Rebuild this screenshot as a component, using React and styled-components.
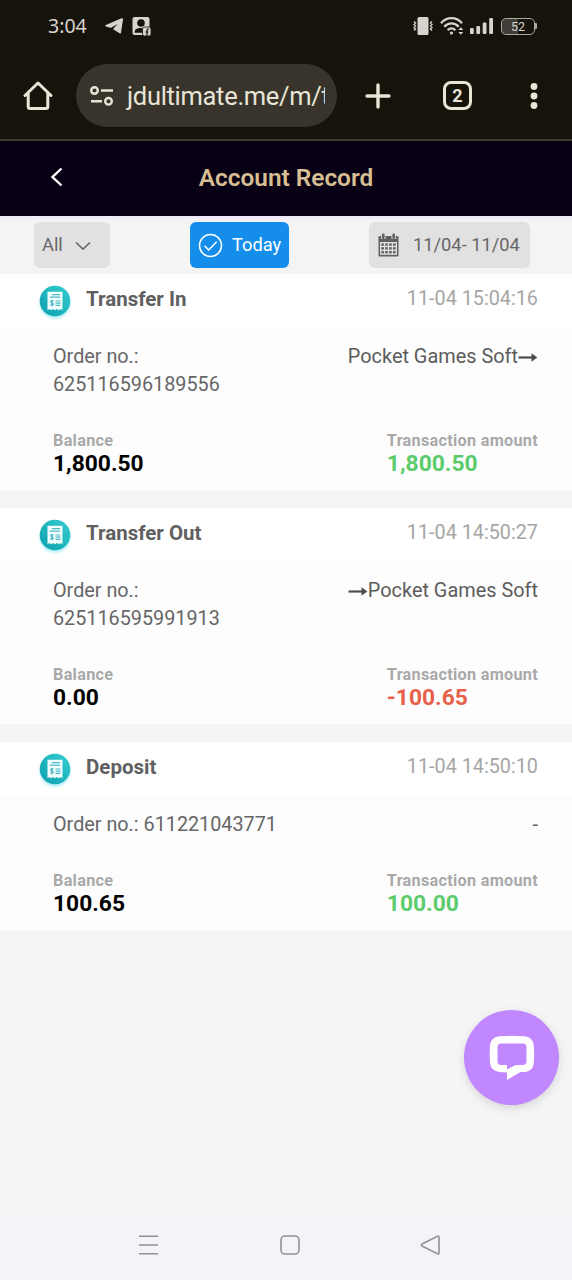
import React from 'react';
import styled, { createGlobalStyle } from 'styled-components';

const GlobalStyle = createGlobalStyle`
  * {
    box-sizing: border-box;
  }
  body {
    margin: 0;
    background: #f5f5f5;
    font-family: Roboto, 'Liberation Sans', sans-serif;
  }
  svg {
    display: block;
    flex: none;
  }
`;

const Screen = styled.div`
  display: flex;
  flex-direction: column;
  width: 572px;
  height: 1280px;
  overflow: hidden;
  background: #f5f5f5;
`;

const Chrome = styled.header`
  height: 141px;
  background: #16130b;
  border-bottom: 2px solid #3c3a35;
  color: #e8e4d6;
`;

const StatusBar = styled.div`
  display: flex;
  align-items: center;
  height: 52px;
  padding: 0 35px 0 48px;
  color: #d6d4ce;
`;

const Clock = styled.span`
  width: 57px;
  padding-bottom: 1px;
  font-family: 'Noto Sans', sans-serif;
  font-size: 19.5px;
`;

const StatusGroup = styled.div`
  display: flex;
  align-items: center;
  gap: ${props => props.$gap}px;
  margin-left: ${props => (props.$right ? 'auto' : '0')};
`;

const AddressBar = styled.div`
  display: flex;
  align-items: center;
  height: 87px;
  padding: 0 34px 0 22px;
`;

const UrlPill = styled.div`
  display: flex;
  align-items: center;
  width: 261px;
  height: 63px;
  margin: 0 27px 0 22px;
  padding: 0 12px 0 13px;
  border-radius: 32px;
  background: #38342c;
`;

const Url = styled.span`
  flex: 1;
  overflow: hidden;
  margin-left: 11px;
  padding-left: 2px;
  white-space: nowrap;
  font-size: 25.5px;
  letter-spacing: -0.3px;
  line-height: 40px;
`;

const TabCount = styled.div`
  display: flex;
  align-items: center;
  justify-content: center;
  width: 29px;
  height: 29px;
  margin: 0 auto 0 51px;
  border: 3px solid #e8e4d6;
  border-radius: 8px;
  font-size: 18px;
  font-weight: 700;
`;

const TitleBar = styled.div`
  display: grid;
  grid-template-columns: 100px 1fr 100px;
  align-items: center;
  height: 75px;
  padding-bottom: 3px;
  background: #080014;
`;

const BackButton = styled.button`
  width: 40px;
  margin-left: 49px;
  padding: 0;
  border: none;
  background: none;
`;

const Title = styled.h1`
  margin: 0;
  color: #d6bf93;
  font-size: 24.4px;
  font-weight: 600;
  text-align: center;
`;

const Filters = styled.div`
  display: flex;
  align-items: center;
  justify-content: space-between;
  height: 58px;
  padding: 0 42px 0 34px;
  background: linear-gradient(#efe6fb, #f4f4f4 5px);
`;

const FilterButton = styled.button`
  display: flex;
  align-items: center;
  gap: ${props => props.$gap}px;
  width: ${props => props.$width}px;
  height: 46px;
  padding: 0 8px;
  border: none;
  border-radius: 6px;
  background: ${props => (props.$active ? '#148eea' : '#e1e1e1')};
  color: ${props => (props.$active ? '#fff' : '#666')};
  font-family: inherit;
  font-size: 18.3px;
  line-height: 24px;
  white-space: nowrap;
`;

const RecordList = styled.main`
  display: flex;
  flex-direction: column;
  flex: 1;
  gap: 18px;
`;

const Record = styled.article`
  background: #fdfdfd;
`;

const RecordHead = styled.div`
  display: flex;
  align-items: center;
  height: 54px;
  padding: 0 34px 3px 37px;
  background: #fff;
`;

const RecordType = styled.h2`
  flex: 1;
  margin: 0 0 0 13px;
  padding-bottom: 2px;
  color: #606060;
  font-size: 20.5px;
  font-weight: 700;
`;

const RecordTime = styled.time`
  padding-bottom: 2px;
  color: #a6a6a6;
  font-size: 19.8px;
`;

const RecordBody = styled.div`
  padding: 15px 34px 14px 53px;
`;

const Row = styled.div`
  display: flex;
  justify-content: space-between;
`;

const Order = styled.div`
  width: 230px;
  color: #666;
  font-size: 19.8px;
  line-height: 28px;
`;

const Provider = styled.div`
  display: flex;
  align-items: center;
  height: 28px;
  color: #5c5c5c;
  font-size: 19.9px;
  line-height: 28px;
`;

const Amounts = styled(Row)`
  margin-top: 30px;
`;

const Label = styled.div`
  color: #a9a9a9;
  font-size: 16.2px;
  font-weight: 700;
  letter-spacing: 0.3px;
  line-height: 23px;
`;

const Amount = styled.div`
  color: ${props => props.$color || '#000'};
  font-size: 22.8px;
  font-weight: 700;
  line-height: 24px;
`;

const NavBar = styled.nav`
  display: flex;
  align-items: center;
  justify-content: space-between;
  height: 64px;
  padding: 0 131px 6px 137px;
  background: #f3f3f8;
`;

const ChatButton = styled.button`
  position: fixed;
  top: 1010px;
  left: 464px;
  display: flex;
  align-items: center;
  justify-content: center;
  width: 95px;
  height: 95px;
  padding: 1px 0 0;
  border: none;
  border-radius: 50%;
  background: #c187ff;
  box-shadow: 0 3px 10px rgba(0, 0, 0, 0.13);
`;

const records = [
  {
    type: 'Transfer In',
    time: '11-04 15:04:16',
    order: '625116596189556',
    wrap: true,
    provider: 'Pocket Games Soft',
    arrow: 'after',
    balance: '1,800.50',
    amount: '1,800.50',
    color: '#5bcb6b',
  },
  {
    type: 'Transfer Out',
    time: '11-04 14:50:27',
    order: '625116595991913',
    wrap: true,
    provider: 'Pocket Games Soft',
    arrow: 'before',
    balance: '0.00',
    amount: '-100.65',
    color: '#e9604a',
  },
  {
    type: 'Deposit',
    time: '11-04 14:50:10',
    order: '611221043771',
    provider: '-',
    balance: '100.65',
    amount: '100.00',
    color: '#5bcb6b',
  },
];

const TelegramIcon = () => (
  <svg width="19" height="16" viewBox="0 0 19 16" fill="#d6d4ce">
    <path d="M18 1.200 16 14.800q-.3 1.200-1.400.5L8.500 11.500q-.6-.5 0-1.100l4-4.400-6 3.600q-.6.3-1.200.1L.8 8.400Q-.3 7.600.9 7L16.500.3Q18.200-.2 18 1.200Z" />
  </svg>
);

const ContactIcon = () => (
  <svg width="19" height="19" viewBox="0 0 19 19">
    <rect x=".5" y="0" width="17" height="18" rx="2" fill="#d6d4ce" />
    <circle cx="9" cy="6" r="3.800" fill="#16130b" />
    <path d="M2.500 15.800c0-3.800 3-4.700 6.500-4.700l2 .5v4.200Z" fill="#16130b" />
    <rect x="10.500" y="10" width="8.500" height="9" rx="2" fill="#d6d4ce" stroke="#16130b" strokeWidth=".8" />
    <path d="M17 12h-.8c-.9 0-1.200.5-1.200 1.300V19M13.500 15h3.200" fill="none" stroke="#16130b" strokeWidth="1.200" />
  </svg>
);

const VibrateIcon = () => (
  <svg width="20" height="18" viewBox="0 0 20 18">
    <rect x="4.500" y="0" width="11" height="18" rx="1.500" fill="#d6d4ce" />
    <path d="m1 4.500 1.600 1.500L1 7.500l1.600 1.500L1 10.500 2.600 12 1 13.500M19 4.500l-1.600 1.500L19 7.500l-1.600 1.500 1.600 1.500-1.600 1.500 1.600 1.500" fill="none" stroke="#d6d4ce" strokeWidth="1.300" />
  </svg>
);

const WifiIcon = () => (
  <svg width="24" height="19" viewBox="0 0 24 19" fill="none" stroke="#d6d4ce" strokeWidth="2.300">
    <path d="M1 6.200C7-.5 16-.5 22 6.200M4.300 9.800c4-4.500 10.400-4.500 14.400 0M7.700 13.200c2.200-2.400 5.400-2.400 7.600 0" />
    <circle cx="11.500" cy="16" r="1.600" fill="#d6d4ce" stroke="none" />
    <path d="m18.300 13 2.500-2.700 2.500 2.700ZM18.300 15l2.500 2.700 2.500-2.700Z" fill="#d6d4ce" stroke="none" />
  </svg>
);

const SignalIcon = () => (
  <svg width="23" height="16" viewBox="0 0 23 16" fill="#d6d4ce">
    <rect x="0" y="10" width="3.800" height="6" rx="1" />
    <rect x="6.300" y="8" width="3.800" height="8" rx="1" />
    <rect x="12.700" y="4.500" width="3.800" height="11.500" rx="1" />
    <rect x="19.200" y="0" width="3.800" height="16" rx="1" />
  </svg>
);

const BatteryShell = styled.div`
  display: flex;
  align-items: center;
  margin-left: 1.5px;
`;

const BatteryBody = styled.div`
  display: flex;
  align-items: center;
  justify-content: center;
  width: 34px;
  height: 17px;
  border: 1.5px solid #aaa8a2;
  border-radius: 5px;
  background: linear-gradient(90deg, #403d37 50%, transparent 50%);
  font-size: 12.5px;
`;

const BatteryTip = styled.div`
  width: 2px;
  height: 6px;
  border-radius: 0 1px 1px 0;
  background: #aaa8a2;
`;

const HomeIcon = () => (
  <svg width="32" height="31" viewBox="0 0 32 31" fill="none" stroke="#e8e4d6" strokeWidth="3" strokeLinecap="round" strokeLinejoin="round">
    <path d="M3 15.500 16 3l13 12.500M6.200 13v13.500q0 2 2 2h15.600q2 0 2-2V13" />
  </svg>
);

const TuneIcon = () => (
  <svg width="25" height="20" viewBox="0 0 25 20" fill="none" stroke="#e8e4d6" strokeWidth="2.400">
    <circle cx="5.500" cy="4.500" r="3.300" />
    <circle cx="19.500" cy="15.300" r="3.300" />
    <path d="M12 4.500h12M2 15.300h11" />
  </svg>
);

const PlusIcon = () => (
  <svg width="28" height="28" viewBox="0 0 28 28" stroke="#e8e4d6" strokeWidth="3.400" strokeLinecap="round">
    <path d="M14 3v22M3 14h22" />
  </svg>
);

const MoreIcon = () => (
  <svg width="8" height="26" viewBox="0 0 8 26" fill="#e8e4d6">
    <circle cx="4" cy="3.500" r="3.400" />
    <circle cx="4" cy="13" r="3.400" />
    <circle cx="4" cy="22.500" r="3.400" />
  </svg>
);

const BackIcon = () => (
  <svg width="15" height="20" viewBox="0 0 15 20" fill="none" stroke="#fff" strokeWidth="2.400">
    <path d="M12.500 1.500 3.500 10l9 8.500" />
  </svg>
);

const ChevronIcon = () => (
  <svg width="16" height="10" viewBox="0 0 16 10" fill="none" stroke="#666" strokeWidth="1.700">
    <path d="m1 2.500 7 6.500 7-6.500" />
  </svg>
);

const CheckIcon = () => (
  <svg width="25" height="25" viewBox="0 0 25 25" fill="none" stroke="#fff" strokeWidth="1.500">
    <circle cx="12.500" cy="12.500" r="11" />
    <path d="m6.500 12.800 4.200 4.200 8-8.300" />
  </svg>
);

const CalendarIcon = () => (
  <svg width="23" height="24" viewBox="-1 0 23 24">
    <path d="M1.800 3h17.400q1.300 0 1.300 1.300v18.200q0 1-1 1h-18q-1 0-1-1V4.300Q.5 3 1.800 3Z" fill="#606060" />
    <path d="M2 9h17v12.800H2Z" fill="#e1e1e1" />
    <path d="M5.300.5v5.500M15.700.5v5.500" stroke="#e1e1e1" strokeWidth="4.400" />
    <path d="M5.300 1.800v3M15.700 1.800v3" stroke="#606060" strokeWidth="2.700" strokeLinecap="round" />
    <g fill="#606060">
      {[10.4, 14.2, 18].map(y =>
        [3.3, 7.2, 11.1, 15].map(x => <rect key={`${x}-${y}`} x={x} y={y} width="2.600" height="2.400" />)
      )}
    </g>
  </svg>
);

const ReceiptIcon = () => (
  <svg width="36" height="44" viewBox="0 -4 36 44">
    <defs>
      <linearGradient id="receipt" x1="0" y1="1" x2="1" y2="0">
        <stop offset="0" stopColor="#0b9fae" />
        <stop offset="1" stopColor="#35cdd0" />
      </linearGradient>
      <filter id="glow" x="-20%" y="-20%" width="140%" height="150%">
        <feGaussianBlur stdDeviation="1.500" />
      </filter>
    </defs>
    <circle cx="18" cy="21.500" r="15" fill="#a9ecf7" filter="url(#glow)" />
    <circle cx="18" cy="19" r="15.300" fill="url(#receipt)" />
    <path d="M10.500 9.800h15v18.400l-1.900-1.200-1.900 1.200-1.900-1.200-1.800 1.200-1.900-1.200-1.900 1.200-1.900-1.200-1.800 1.200Z" fill="#f2fdfd" />
    <path d="M15 12.700h8M12.700 15.200h10.500M18.500 19h5M18.500 21.200h5M18.500 23.400h5" stroke="#4fbcc5" strokeWidth="1.200" />
    <path d="M16.500 19.200c-.8-.8-3-.7-3 .6 0 1.500 3 .8 3 2.400 0 1.400-2.400 1.400-3.200.5M15 17.800v6.400" fill="none" stroke="#2dadb8" strokeWidth="1" />
  </svg>
);

const ArrowIcon = () => (
  <svg width="20" height="12" viewBox="0 0 20 12">
    <path d="M.5 6.500h15" stroke="#4c4c4c" strokeWidth="2.200" />
    <path d="m13.500 2.200 5.800 4.300-5.800 4.300Z" fill="#4c4c4c" />
  </svg>
);

const ChatIcon = () => (
  <svg width="46" height="46" viewBox="0 0 46 46">
    <path fillRule="evenodd" d="M10.500 1.300Q23 .2 35.500 1.300 43.800 2 44.800 10.500q.8 8.500 0 17.500-.8 8-8.300 9h-5L18 45v-7.500l-7.500-.5Q2 36 1 28q-.7-9 0-17.500Q2 2 10.500 1.300ZM12 8.500Q8.700 8.700 8.500 12v14.500q.2 3.200 3.500 3.500h6v4.500l8.500-4.500H34q3.300-.3 3.500-3.500V12q-.2-3.300-3.500-3.500Z" fill="#fff" />
  </svg>
);

const MenuIcon = () => (
  <svg width="22" height="22" viewBox="0 0 22 22" stroke="#939299" strokeWidth="1.600">
    <path d="M2 2.200h19M2 11h19M2 19.700h19" />
  </svg>
);

const SquareIcon = () => (
  <svg width="20" height="20" viewBox="0 0 20 20" fill="none" stroke="#939299" strokeWidth="1.600">
    <rect x="1" y="1" width="18" height="18" rx="4" />
  </svg>
);

const TriangleIcon = () => (
  <svg width="21" height="20" viewBox="0 0 21 20" fill="none" stroke="#939299" strokeWidth="1.600" strokeLinejoin="round">
    <path d="M2 9 17.500 1.200q1.500-.5 1.500 1v15.600q0 1.500-1.500 1L2 11q-1.300-1 0-2Z" />
  </svg>
);

const RecordCard = ({ record }) => (
  <Record>
    <RecordHead>
      <ReceiptIcon />
      <RecordType>{record.type}</RecordType>
      <RecordTime>{record.time}</RecordTime>
    </RecordHead>
    <RecordBody>
      <Row>
        <Order>
          Order no.:{record.wrap ? <br /> : ' '}{record.order}
        </Order>
        <Provider>
          {record.arrow === 'before' && <ArrowIcon />}
          {record.provider}
          {record.arrow === 'after' && <ArrowIcon />}
        </Provider>
      </Row>
      <Amounts>
        <div>
          <Label>Balance</Label>
          <Amount>{record.balance}</Amount>
        </div>
        <div>
          <Label>Transaction amount</Label>
          <Amount $color={record.color}>{record.amount}</Amount>
        </div>
      </Amounts>
    </RecordBody>
  </Record>
);

export default function App() {
  return (
    <Screen>
      <GlobalStyle />
      <Chrome>
        <StatusBar>
          <Clock>3:04</Clock>
          <StatusGroup $gap={8}>
            <TelegramIcon />
            <ContactIcon />
          </StatusGroup>
          <StatusGroup $gap={6.5} $right>
            <VibrateIcon />
            <WifiIcon />
            <SignalIcon />
            <BatteryShell>
              <BatteryBody>52</BatteryBody>
              <BatteryTip />
            </BatteryShell>
          </StatusGroup>
        </StatusBar>
        <AddressBar>
          <HomeIcon />
          <UrlPill>
            <TuneIcon />
            <Url>jdultimate.me/m/t</Url>
          </UrlPill>
          <PlusIcon />
          <TabCount>2</TabCount>
          <MoreIcon />
        </AddressBar>
      </Chrome>

      <TitleBar>
        <BackButton><BackIcon /></BackButton>
        <Title>Account Record</Title>
      </TitleBar>

      <Filters>
        <FilterButton $width={76} $gap={12}>
          All
          <ChevronIcon />
        </FilterButton>
        <FilterButton $width={99} $gap={9} $active>
          <CheckIcon />
          Today
        </FilterButton>
        <FilterButton $width={161} $gap={13}>
          <CalendarIcon />
          11/04- 11/04
        </FilterButton>
      </Filters>

      <RecordList>
        {records.map(record => <RecordCard key={record.order} record={record} />)}
      </RecordList>

      <NavBar>
        <MenuIcon />
        <SquareIcon />
        <TriangleIcon />
      </NavBar>

      <ChatButton><ChatIcon /></ChatButton>
    </Screen>
  );
}
